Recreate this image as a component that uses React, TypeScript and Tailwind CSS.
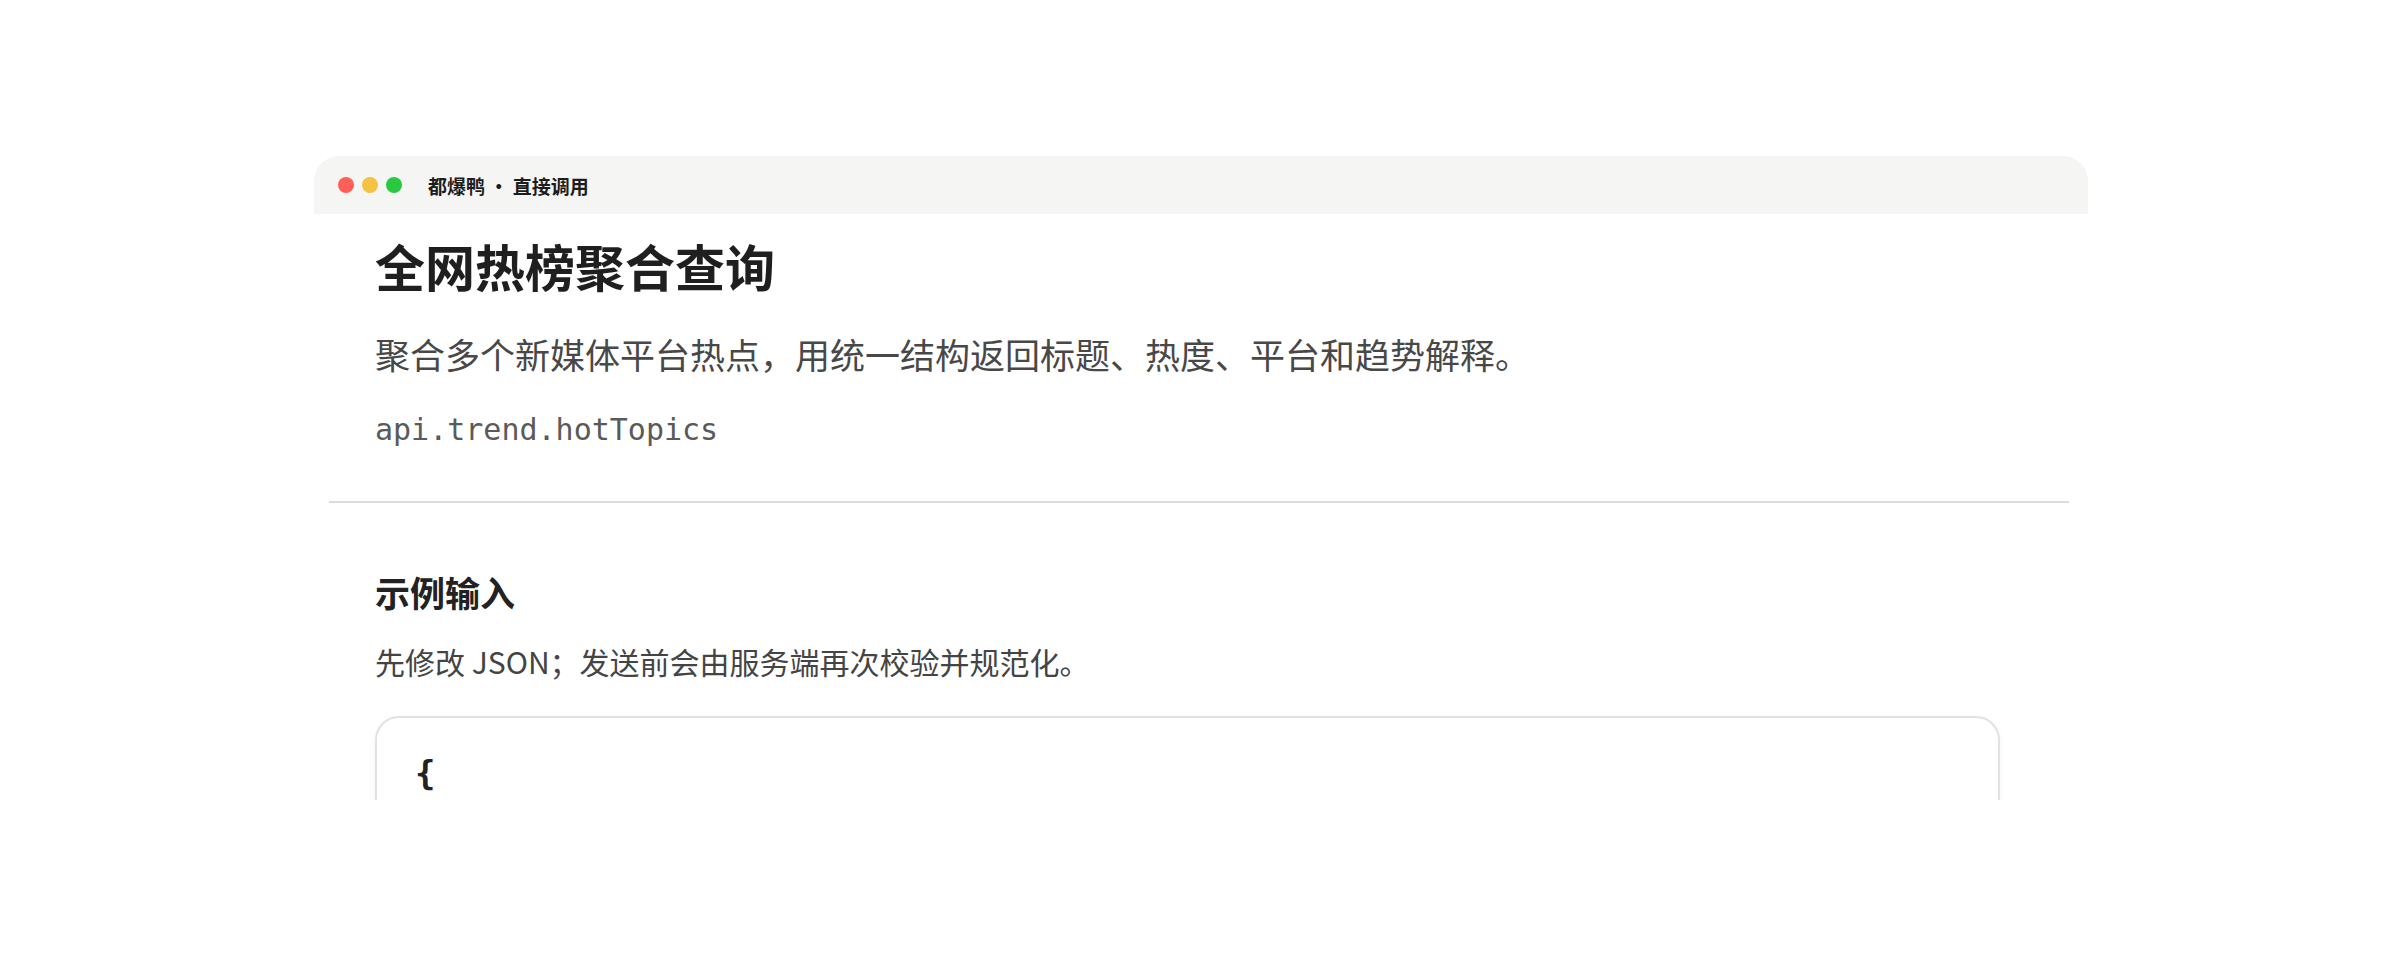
import React from "react";

const cjk = { fontFamily: '"Noto Sans CJK SC", "Noto Sans", sans-serif' };
const mono = { fontFamily: '"DejaVu Sans Mono", "Liberation Mono", "Noto Sans CJK SC", monospace' };

export default function App() {
  return (
    <div className="w-[2400px] h-[972px] bg-white" style={cjk}>
      <div className="pt-[156px] pl-[314px]">
        <div className="w-[1774px] h-[644px] overflow-hidden bg-white rounded-t-[25px]">
          {/* title bar */}
          <div className="h-[58px] bg-[#f5f5f3] flex items-center pl-[24px]">
            <div className="flex items-center gap-[8px]">
              <span className="w-[16px] h-[16px] rounded-full bg-[#fe5f57]" />
              <span className="w-[16px] h-[16px] rounded-full bg-[#f5c242]" />
              <span className="w-[16px] h-[16px] rounded-full bg-[#28c840]" />
            </div>
            <span className="ml-[26px] text-[19px] font-bold text-[#1d1d1d] leading-none">都爆鸭 · 直接调用</span>
          </div>

          {/* header */}
          <div className="pl-[61px] pt-[21px]">
            <h1 className="text-[50px] leading-[60px] font-bold text-[#1f1f1f]">全网热榜聚合查询</h1>
            <p className="mt-[35px] text-[35px] leading-[48px] text-[#484848]">
              聚合多个新媒体平台热点，用统一结构返回标题、热度、平台和趋势解释。
            </p>
            <p className="mt-[32px] text-[30px] leading-[40px] text-[#5a5a5a]" style={mono}>
              api.trend.hotTopics
            </p>
          </div>

          <div className="mt-[51px] ml-[15px] mr-[19px] h-[2px] bg-[#dcdcdc]" />

          {/* section */}
          <div className="pl-[61px] pr-[88px]">
            <h2 className="mt-[65px] text-[35px] leading-[48px] font-bold text-[#222]">示例输入</h2>
            <p className="mt-[25px] text-[30px] leading-[40px] text-[#444]">
              先修改 JSON；发送前会由服务端再次校验并规范化。
            </p>
            <div className="mt-[35px] rounded-[24px] border-2 border-[#e2e2e2] bg-white shadow-[0_2px_6px_rgba(0,0,0,0.04)] pl-[38px] pt-[35px] h-[300px]">
              <div className="text-[34px] leading-[40px] font-bold text-[#222]" style={mono}>
                {"{"}
              </div>
            </div>
          </div>
        </div>
      </div>
    </div>
  );
}
